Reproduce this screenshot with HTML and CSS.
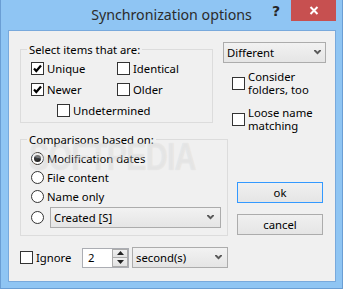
FILE: index.html
```html
<!DOCTYPE html>
<html>
<head>
<meta charset="utf-8">
<link rel="stylesheet" href="styles.css">
</head>
<body>
<div class="window">
  <div class="titlebar">
    <div class="title">Synchronization options</div>
    <div class="controls">
      <span class="help">?</span>
      <span class="close"><svg width="10" height="9" viewBox="0 0 10 9"><path d="M1.5 1 L8.5 8 M8.5 1 L1.5 8" stroke="#fff" stroke-width="2" fill="none"/></svg></span>
    </div>
  </div>
  <div class="client">
    <div class="row-a">
      <div class="group group1">
        <div class="group-title">Select items that are:</div>
        <div class="check-grid">
          <div class="check"><span class="box"><svg width="11" height="11" viewBox="0 0 11 11"><path d="M2 5.5 L4.3 8 L9 2.5" stroke="#000" stroke-width="2.2" fill="none"/></svg></span>Unique</div>
          <div class="check"><span class="box"></span>Identical</div>
          <div class="check"><span class="box"><svg width="11" height="11" viewBox="0 0 11 11"><path d="M2 5.5 L4.3 8 L9 2.5" stroke="#000" stroke-width="2.2" fill="none"/></svg></span>Newer</div>
          <div class="check"><span class="box"></span>Older</div>
        </div>
        <div class="check check-last indent"><span class="box"></span>Undetermined</div>
      </div>
      <div class="side-top">
        <div class="combo combo-diff"><span>Different</span><svg width="7" height="5" viewBox="0 0 7 5"><path d="M0 0 H1.8 L3.5 1.8 L5.2 0 H7 V1 L3.5 4.6 L0 1 Z" fill="#5a5a5a"/></svg></div>
        <div class="check wrap consider"><span class="box"></span><span class="wrap-text">Consider folders, too</span></div>
        <div class="check wrap loose"><span class="box"></span><span class="wrap-text">Loose name matching</span></div>
      </div>
    </div>
    <div class="row-b">
      <div class="group group2">
        <div class="group-title">Comparisons based on:</div>
        <div class="radio r1"><span class="dot on"></span>Modification dates</div>
        <div class="radio r2"><span class="dot"></span>File content</div>
        <div class="radio r3"><span class="dot"></span>Name only</div>
        <div class="radio r4"><span class="dot"></span>
          <div class="combo combo-created"><span>Created [S]</span><svg width="7" height="5" viewBox="0 0 7 5"><path d="M0 0 H1.8 L3.5 1.8 L5.2 0 H7 V1 L3.5 4.6 L0 1 Z" fill="#5a5a5a"/></svg></div>
        </div>
      </div>
      <div class="buttons">
        <button class="btn btn-default">ok</button>
        <button class="btn btn-cancel">cancel</button>
      </div>
    </div>
    <div class="row-c">
      <span class="box"></span>
      <span class="ignore-label">Ignore</span>
      <div class="spin">
        <span class="spin-value">2</span>
        <div class="spin-btns">
          <span class="spin-btn"><svg width="7" height="4" viewBox="0 0 7 4"><path d="M0 4 L3.5 0 L7 4 Z" fill="#222"/></svg></span>
          <span class="spin-btn"><svg width="7" height="4" viewBox="0 0 7 4"><path d="M0 0 L3.5 4 L7 0 Z" fill="#222"/></svg></span>
        </div>
      </div>
      <div class="combo combo-sec"><span>second(s)</span><svg width="7" height="5" viewBox="0 0 7 5"><path d="M0 0 H1.8 L3.5 1.8 L5.2 0 H7 V1 L3.5 4.6 L0 1 Z" fill="#5a5a5a"/></svg></div>
    </div>
    <span class="watermark">SOFTPEDIA</span>
  </div>
</div>
</body>
</html>
```
FILE: styles.css
```css
* { box-sizing: border-box; }
html, body { margin: 0; padding: 0; }
body {
  font-family: "Noto Sans", "Open Sans", sans-serif;
  font-size: 11.3px;
  color: #000;
  background: #8fc5f3;
}
.window {
  width: 343px;
  height: 289px;
  background: #8fc5f3;
  border-left: 1px solid #6a9ed4;
  border-right: 1px solid #6a9ed4;
  border-bottom: 1px solid #6a9ed4;
  display: flex;
  flex-direction: column;
}
.titlebar {
  height: 30px;
  display: grid;
}
.title {
  grid-area: 1 / 1;
  text-align: center;
  font-size: 14.2px;
  line-height: 18px;
  padding-top: 6px;
  color: #2b2b2b;
}
.controls {
  grid-area: 1 / 1;
  justify-self: end;
  align-self: start;
  display: flex;
  align-items: flex-start;
  margin-right: 6px;
}
.help {
  font-family: "DejaVu Sans", sans-serif;
  font-weight: bold;
  font-size: 14px;
  line-height: 14px;
  color: #262626;
  margin-top: 4px;
  margin-right: 11px;
}
.close {
  width: 45px;
  height: 21px;
  background: #c75050;
  display: flex;
  align-items: center;
  justify-content: center;
}
.client {
  margin-left: 7px;
  width: 328px;
  height: 252px;
  border: 1px solid #78a9dc;
  background: #f0f0f0;
  padding: 10px 0 0 11px;
  position: relative;
  overflow: hidden;
}
.row-a {
  display: flex;
  height: 91px;
}
.row-b {
  display: flex;
  height: 104px;
}
.group {
  border: 1px solid #dcdcdc;
}
.group-title {
  width: fit-content;
  margin: -8px 0 0 -4px;
  padding: 0 2px;
  line-height: 15px;
  background: #f0f0f0;
}
.group1 {
  width: 193px;
  height: 74px;
  margin-top: 8px;
  padding-left: 10px;
}
.check-grid {
  display: grid;
  grid-template-columns: 86px auto;
  margin-top: 1px;
}
.check {
  display: flex;
  align-items: center;
  height: 21px;
}
.check-last { height: 20px; }
.indent { margin-left: 26px; }
.box {
  width: 13px;
  height: 13px;
  flex: none;
  border: 1px solid #333;
  background: #fff;
  margin-right: 3px;
  display: flex;
  align-items: center;
  justify-content: center;
}
.side-top {
  margin-left: 10px;
  width: 103px;
}
.combo {
  display: flex;
  align-items: center;
  justify-content: space-between;
  height: 21px;
  border: 1px solid #acacac;
  background: linear-gradient(#f2f2f2, #e5e5e5);
  padding: 0 4px 0 3px;
  line-height: 15px;
}
.combo-diff {
  margin-top: 1px;
  width: 103px;
}
.wrap {
  height: 26px;
  margin-left: 9px;
}
.consider { margin-top: 7px; }
.loose { margin-top: 10px; }
.wrap-text {
  width: 76px;
  line-height: 13px;
}
.group2 {
  width: 208px;
  height: 97px;
  margin-top: 7px;
  padding-left: 10px;
}
.radio {
  display: flex;
  align-items: center;
  height: 19px;
}
.r1 { margin-top: 2px; }
.r3 { height: 18px; }
.r4 { margin-top: 2px; height: 21px; }
.dot {
  width: 13px;
  height: 13px;
  flex: none;
  border: 1px solid #333;
  border-radius: 50%;
  background: #fff;
  margin-right: 3px;
  display: flex;
  align-items: center;
  justify-content: center;
}
.dot.on::after {
  content: "";
  width: 7px;
  height: 7px;
  border-radius: 50%;
  background: radial-gradient(circle at 40% 40%, #444, #111);
}
.combo-created {
  width: 171px;
  margin-left: 3px;
  padding-right: 6px;
}
.buttons {
  margin-left: 9px;
  margin-top: 50px;
  display: flex;
  flex-direction: column;
  gap: 11px;
}
.btn {
  width: 86px;
  height: 21px;
  border: 1px solid #acacac;
  background: linear-gradient(#f0f0f0, #e5e5e5);
  font: inherit;
  color: #000;
  padding: 0;
  line-height: 17px;
}
.btn-default { border-color: #3399ff; }
.row-c {
  display: flex;
  align-items: center;
  height: 21px;
  margin-top: 11px;
}
.ignore-label {
  width: 46px;
}
.spin {
  width: 47px;
  height: 20px;
  border: 1px solid #abadb3;
  background: #fff;
  display: flex;
}
.spin-value {
  padding-left: 5px;
  line-height: 18px;
  flex: 1;
}
.spin-btns {
  width: 16px;
  display: flex;
  flex-direction: column;
}
.spin-btn {
  flex: 1;
  border: 1px solid #acacac;
  background: linear-gradient(#f0f0f0, #e2e2e2);
  display: flex;
  align-items: center;
  justify-content: center;
}
.spin-btn + .spin-btn { border-top: none; }
.combo-sec {
  width: 96px;
  margin-left: 3px;
  padding-right: 5px;
}
.watermark {
  position: absolute;
  left: 20px;
  top: 104px;
  font-family: "Liberation Sans", sans-serif;
  font-weight: bold;
  font-size: 38px;
  line-height: 44px;
  letter-spacing: -1px;
  transform: scaleX(0.8);
  transform-origin: left top;
  color: rgba(255, 255, 255, 0.35);
  text-shadow: 0 0 1px rgba(0, 0, 0, 0.1);
  pointer-events: none;
}
```
